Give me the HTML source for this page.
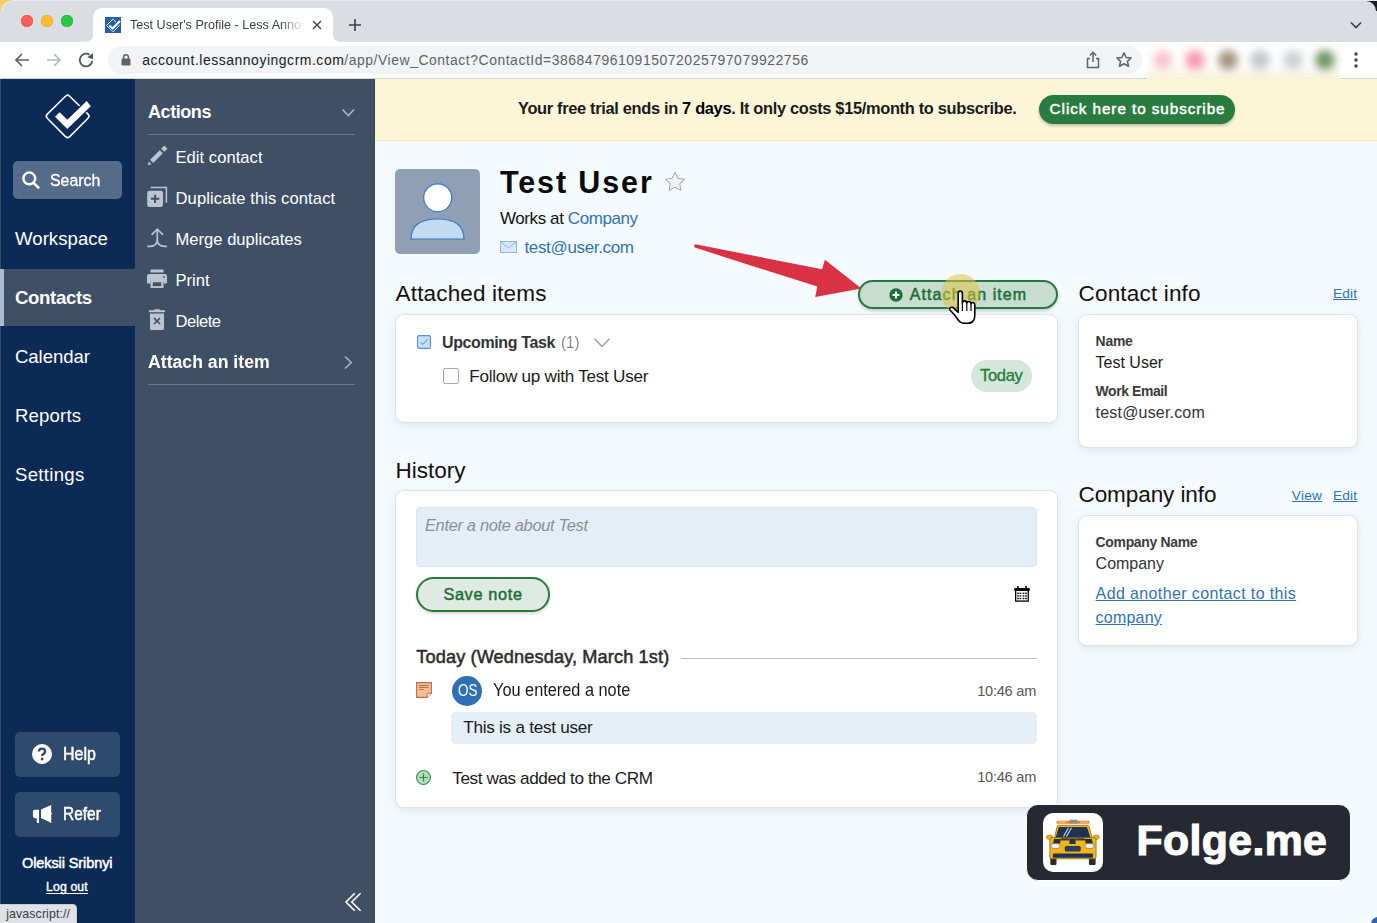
<!DOCTYPE html>
<html><head><meta charset="utf-8"><title>Test User's Profile</title>
<style>
html,body{margin:0;padding:0;width:1377px;height:923px;overflow:hidden;background:#fff;}
body{position:relative;font-family:"Liberation Sans",sans-serif;}
.r{position:absolute;}
.t{position:absolute;white-space:nowrap;line-height:1;}
svg.r{overflow:visible;}
</style></head><body>
<div class="r" style="left:0px;top:0px;width:1377px;height:42px;background:#dadde1;"></div>
<div class="r" style="left:0px;top:42px;width:1377px;height:37px;background:#fff;"></div>
<svg class="r" style="left:1365px;top:0" width="12" height="12"><path d="M12 0 H1 V1 A10 10 0 0 1 11 11 H12 Z" fill="#1d1d1f"/></svg>
<div class="r" style="left:0px;top:78px;width:1377px;height:1px;background:#d3d6da;"></div>
<div class="r" style="left:93px;top:8px;width:240px;height:35px;background:#fff;border-radius:9px 9px 0 0;"></div>
<svg class="r" style="left:85px;top:34px" width="8" height="8"><path d="M0 8 Q8 8 8 0 L8 8 Z" fill="#fff"/></svg>
<svg class="r" style="left:333px;top:34px" width="8" height="8"><path d="M8 8 Q0 8 0 0 L0 8 Z" fill="#fff"/></svg>
<div class="r" style="left:21px;top:15px;width:12px;height:12px;border-radius:50%;background:#fe5f57;box-shadow:inset 0 0 0 0.5px #e14640;"></div>
<div class="r" style="left:41px;top:15px;width:12px;height:12px;border-radius:50%;background:#febc2e;box-shadow:inset 0 0 0 0.5px #dfa023;"></div>
<div class="r" style="left:61px;top:15px;width:12px;height:12px;border-radius:50%;background:#28c840;box-shadow:inset 0 0 0 0.5px #1aab29;"></div>
<div class="r" style="left:0px;top:0px;width:1377px;height:1px;background:#e9e9ec;"></div>
<svg class="r" style="left:0;top:0" width="14" height="14"><path d="M0 0 H11 V1 A10 10 0 0 0 1 11 V11 H0 Z" fill="#efce62"/><path d="M11 1.2 A9.8 9.8 0 0 0 1.2 11" fill="none" stroke="#e9eaee" stroke-width="1"/></svg>
<svg class="r" style="left:105px;top:17px" width="16" height="16" viewBox="0 0 16 16"><rect width="16" height="16" fill="#2360a8"/>
<path d="M7.9 2.1 L14.3 8.5 L7.9 14.9 L1.5 8.5 Z" fill="none" stroke="#fff" stroke-width="0.9" stroke-linejoin="round"/>
<path d="M4.4 8.4 L7.6 11.6 L15 4" fill="none" stroke="#2360a8" stroke-width="4"/>
<path d="M4.4 8.4 L7.6 11.6 L15 4" fill="none" stroke="#fff" stroke-width="2.1"/></svg>
<div class="t" style="left:130px;top:17px;font-size:12.6px;line-height:16px;color:#3c4043;width:174px;overflow:hidden;-webkit-mask-image:linear-gradient(90deg,#000 150px,transparent 174px);">Test User's Profile - Less Annoying CRM</div>
<svg class="r" style="left:312px;top:20px" width="10" height="10"><path d="M1 1L9 9M9 1L1 9" stroke="#3c4043" stroke-width="1.4"/></svg>
<svg class="r" style="left:348px;top:18px" width="14" height="14"><path d="M7 1V13M1 7H13" stroke="#3c4043" stroke-width="1.6"/></svg>
<svg class="r" style="left:1350px;top:21px" width="12" height="8"><path d="M1 1.5L6 6.5L11 1.5" fill="none" stroke="#3c4043" stroke-width="1.6"/></svg>
<svg class="r" style="left:14px;top:52px" width="16" height="16"><path d="M15 8H2M8 2L2 8L8 14" fill="none" stroke="#5f6368" stroke-width="1.7"/></svg>
<svg class="r" style="left:46px;top:52px" width="16" height="16"><path d="M1 8H14M8 2L14 8L8 14" fill="none" stroke="#b5b8bd" stroke-width="1.7"/></svg>
<svg class="r" style="left:78px;top:52px" width="16" height="16"><path d="M14.3 9 A6.3 6.3 0 1 1 11.6 2.8" fill="none" stroke="#4f5358" stroke-width="1.8"/><path d="M9.4 5.2 L15 1.2 L15 7.2Z" fill="#4f5358"/></svg>
<div class="r" style="left:108px;top:46px;width:1034px;height:28px;border-radius:14px;background:#f1f3f4;"></div>
<svg class="r" style="left:121px;top:53px" width="10" height="13"><path d="M2.6 6V4.2a2.4 2.4 0 0 1 4.8 0V6" fill="none" stroke="#5f6368" stroke-width="1.5"/><rect x="0.5" y="5.6" width="9" height="7" rx="1.3" fill="#5f6368"/></svg>
<div class="t" style="left:142.30px;top:53.70px;font-size:13.95px;letter-spacing:0.539px;"><span style="color:#202124;">account.lessannoyingcrm.com</span><span style="color:#5f6368;">/app/View_Contact?ContactId=3868479610915072025797079922756</span></div>
<svg class="r" style="left:1085px;top:51px" width="16" height="18"><path d="M8 1.5V11M4.8 4.5L8 1.3L11.2 4.5" fill="none" stroke="#5f6368" stroke-width="1.5"/><path d="M5 7.5H2.5V16.5H13.5V7.5H11" fill="none" stroke="#5f6368" stroke-width="1.5"/></svg>
<svg class="r" style="left:1115px;top:51px" width="18" height="18" viewBox="0 0 24 24"><path d="M12 2.5l2.9 6.1 6.6.7-4.9 4.5 1.4 6.5L12 17l-6 3.3 1.4-6.5L2.5 9.3l6.6-.7z" fill="none" stroke="#5f6368" stroke-width="2" stroke-linejoin="round"/></svg>
<div class="r" style="left:1147px;top:42px;width:193px;height:37px;background:linear-gradient(#fff 60%,#f7f2dc);"></div>
<div class="r" style="left:1153px;top:50px;width:20px;height:20px;border-radius:50%;background:#f7c6d0;filter:blur(4.5px);"></div>
<div class="r" style="left:1185px;top:50px;width:20px;height:20px;border-radius:50%;background:#f59aae;filter:blur(4.5px);"></div>
<div class="r" style="left:1218px;top:50px;width:20px;height:20px;border-radius:50%;background:#a5937d;filter:blur(4.5px);"></div>
<div class="r" style="left:1250px;top:50px;width:20px;height:20px;border-radius:50%;background:#c4c6cb;filter:blur(4.5px);"></div>
<div class="r" style="left:1283px;top:50px;width:20px;height:20px;border-radius:50%;background:#cfd0d5;filter:blur(4.5px);"></div>
<div class="r" style="left:1315px;top:50px;width:20px;height:20px;border-radius:50%;background:#6d9662;filter:blur(4.5px);"></div>
<svg class="r" style="left:1352px;top:51px" width="8" height="18"><circle cx="4" cy="3" r="1.7" fill="#3c4043"/><circle cx="4" cy="9" r="1.7" fill="#3c4043"/><circle cx="4" cy="15" r="1.7" fill="#3c4043"/></svg>
<div class="r" style="left:0px;top:79px;width:135px;height:844px;background:#0b2a55;"></div>
<div class="r" style="left:0px;top:79px;width:1px;height:844px;background:#3b4d66;"></div>
<div class="r" style="left:135px;top:79px;width:240px;height:844px;background:#3f5066;"></div>
<div class="r" style="left:374px;top:79px;width:1px;height:844px;background:#37475d;"></div>
<div class="r" style="left:375px;top:79px;width:1002px;height:844px;background:#f5fafe;"></div>
<div class="r" style="left:375px;top:79px;width:1002px;height:62px;background:#fdf5d8;border-bottom:1px solid #f0e2a8;border-left:1px solid #fff3c4;box-sizing:border-box;"></div>
<svg class="r" style="left:40px;top:88px" width="56" height="56" viewBox="40 88 56 56">
<path d="M65.5 96.2 Q67.6 94.1 69.7 96.2 L88 114.1 Q90.1 116.2 88 118.3 L69.7 136.6 Q67.6 138.7 65.5 136.6 L47.3 118.3 Q45.2 116.2 47.3 114.1 Z" fill="none" stroke="#fff" stroke-width="1.5"/>
<path d="M59.7 112.3 L67.3 119.7 L86.7 101 L90.8 106.2 L67.3 129 L55 116.8 Z" fill="#fff" stroke="#0b2a55" stroke-width="2.6" paint-order="stroke" stroke-linejoin="miter"/>
</svg>
<div class="r" style="left:13px;top:161px;width:109px;height:38px;border-radius:5px;background:#556b8a;"></div>
<svg class="r" style="left:21px;top:170px" width="20" height="20"><circle cx="8.3" cy="8.4" r="5.9" fill="none" stroke="#fff" stroke-width="2.4"/><path d="M12.6 12.8L17.4 17.6" stroke="#fff" stroke-width="2.6" stroke-linecap="round"/></svg>
<div class="t" style="left:50.00px;top:173.00px;font-size:16.86px;letter-spacing:0.000px;color:#fff;transform:scaleX(0.9434);transform-origin:0 0;-webkit-text-stroke:0.35px #fff;">Search</div>
<div class="r" style="left:0px;top:269px;width:135px;height:57px;background:#3f5066;"></div>
<div class="r" style="left:0px;top:269px;width:4px;height:57px;background:#a9bbd0;"></div>
<div class="t" style="left:15.00px;top:230.00px;font-size:18.60px;letter-spacing:0.037px;color:#fff;">Workspace</div>
<div class="t" style="left:15.00px;top:289.00px;font-size:18.60px;letter-spacing:-0.343px;color:#fff;font-weight:700;">Contacts</div>
<div class="t" style="left:15.00px;top:348.00px;font-size:18.60px;letter-spacing:-0.086px;color:#fff;">Calendar</div>
<div class="t" style="left:15.00px;top:407.00px;font-size:18.60px;letter-spacing:0.167px;color:#fff;">Reports</div>
<div class="t" style="left:15.00px;top:466.00px;font-size:18.60px;letter-spacing:0.300px;color:#fff;">Settings</div>
<div class="r" style="left:15px;top:732px;width:105px;height:45px;border-radius:5px;background:#2f4a6c;"></div>
<div class="r" style="left:15px;top:792px;width:105px;height:45px;border-radius:5px;background:#2f4a6c;"></div>
<svg class="r" style="left:32px;top:744px" width="20" height="20" viewBox="0 0 20 20"><circle cx="10" cy="10" r="10" fill="#fff"/><path d="M6.9 7.6 Q6.9 4.6 10 4.6 Q13.1 4.6 13.1 7.4 Q13.1 9 11.3 10 Q10.1 10.7 10.1 12" fill="none" stroke="#2f4a6c" stroke-width="2.3"/><circle cx="10.1" cy="15" r="1.4" fill="#2f4a6c"/></svg>
<div class="t" style="left:62.60px;top:746.00px;font-size:17.44px;letter-spacing:0.000px;color:#fff;transform:scaleX(0.9167);transform-origin:0 0;-webkit-text-stroke:0.5px #fff;">Help</div>
<svg class="r" style="left:32px;top:804px" width="21" height="20" viewBox="0 0 21 20"><path d="M3 5.75 H7.05 V19.1 H4.8 V14.2 H3 Q0.9 14.2 0.9 12.1 V7.85 Q0.9 5.75 3 5.75Z" fill="#fff"/><path d="M9 5.4 L19.2 0.9 V8.4 L20.1 9.6 L19.2 10.8 V18.9 L9 13.9Z" fill="#fff"/></svg>
<div class="t" style="left:62.60px;top:806.00px;font-size:17.44px;letter-spacing:0.000px;color:#fff;transform:scaleX(0.8860);transform-origin:0 0;-webkit-text-stroke:0.5px #fff;">Refer</div>
<div class="t" style="left:22.00px;top:855.70px;font-size:14.54px;letter-spacing:-0.107px;color:#fff;-webkit-text-stroke:0.5px #fff;">Oleksii Sribnyi</div>
<div class="t" style="left:46.00px;top:881.40px;font-size:12.21px;letter-spacing:0.167px;color:#fff;-webkit-text-stroke:0.4px #fff;text-decoration:underline;text-underline-offset:2px;">Log out</div>
<div class="t" style="left:148.00px;top:103.00px;font-size:18.02px;letter-spacing:-0.433px;color:#fff;font-weight:700;">Actions</div>
<svg class="r" style="left:341px;top:108px" width="15" height="10"><path d="M1.5 1.5L7.3 7.5L13.1 1.5" fill="none" stroke="#aab4c1" stroke-width="1.6"/></svg>
<div class="r" style="left:148px;top:134px;width:207px;height:1px;background:#6a7a8e;"></div>
<div class="r" style="left:148px;top:384px;width:207px;height:1px;background:#6a7a8e;"></div>
<svg class="r" style="left:147px;top:145px" width="22" height="22" viewBox="0 0 22 22"><path d="M4.6 16.4 L14.3 6.7" stroke="#bcc4ce" stroke-width="4.4"/><path d="M15.7 5.3 L18.9 2.1" stroke="#bcc4ce" stroke-width="4.4"/><path d="M0.8 20.2 L1.7 16.4 L4.6 19.3 Z" fill="#bcc4ce"/></svg>
<div class="t" style="left:175.50px;top:150.20px;font-size:16.57px;letter-spacing:0.045px;color:#fff;">Edit contact</div>
<svg class="r" style="left:147px;top:186px" width="22" height="22" viewBox="0 0 22 22"><path d="M3.7 1.4 H19.4 V16.7" fill="none" stroke="#bcc4ce" stroke-width="1.5"/><rect x="0.2" y="4.8" width="15.8" height="16.1" rx="2.2" fill="#bcc4ce"/><path d="M8.1 8.7V17M3.95 12.85H12.25" stroke="#3f5066" stroke-width="2"/></svg>
<div class="t" style="left:175.50px;top:190.80px;font-size:16.57px;letter-spacing:0.105px;color:#fff;">Duplicate this contact</div>
<svg class="r" style="left:147px;top:227px" width="22" height="22" viewBox="0 0 22 22"><path d="M10.3 2.4 V13 Q10.3 19 3 19.4 H0.2" fill="none" stroke="#bcc4ce" stroke-width="1.7"/><path d="M10.3 13 Q10.3 19 17.6 19.4 H19.8" fill="none" stroke="#bcc4ce" stroke-width="1.7"/><path d="M4.6 7.9 L10.3 2.2 L16 7.9" fill="none" stroke="#bcc4ce" stroke-width="1.7"/></svg>
<div class="t" style="left:175.50px;top:232.00px;font-size:16.57px;letter-spacing:0.013px;color:#fff;">Merge duplicates</div>
<svg class="r" style="left:146px;top:269px" width="22" height="20" viewBox="0 0 22 20"><rect x="4.5" y="0.5" width="13" height="3" rx=".5" fill="#bcc4ce"/><path d="M3 5 H19 Q21 5 21 7 V14.5 H17.5 V12 H4.5 V14.5 H1 V7 Q1 5 3 5Z" fill="#bcc4ce"/><path d="M4.5 12 H17.5 V19 H4.5Z" fill="#bcc4ce"/><rect x="6.8" y="13.3" width="8.4" height="3.8" fill="#3f5066"/><circle cx="18" cy="8" r=".9" fill="#3f5066"/></svg>
<div class="t" style="left:175.40px;top:273.00px;font-size:16.57px;letter-spacing:0.050px;color:#fff;">Print</div>
<svg class="r" style="left:148px;top:309px" width="18" height="22" viewBox="0 0 18 22"><rect x="1" y="1.2" width="16" height="2" fill="#bcc4ce"/><rect x="6" y=".3" width="6" height="1.6" rx=".6" fill="#bcc4ce"/><path d="M2 4.6 H16 V19.5 Q16 21 14.5 21 H3.5 Q2 21 2 19.5Z" fill="#bcc4ce"/><path d="M6 9 L12 15 M12 9 L6 15" stroke="#3f5066" stroke-width="1.7"/></svg>
<div class="t" style="left:175.40px;top:313.70px;font-size:16.57px;letter-spacing:-0.440px;color:#fff;">Delete</div>
<div class="t" style="left:148.00px;top:353.00px;font-size:18.90px;letter-spacing:0.000px;color:#fff;transform:scaleX(0.9346);transform-origin:0 0;font-weight:700;">Attach an item</div>
<svg class="r" style="left:343px;top:355px" width="10" height="15"><path d="M2 1.5L8.2 7.5L2 13.5" fill="none" stroke="#aab4c1" stroke-width="1.6"/></svg>
<svg class="r" style="left:343px;top:891px" width="20" height="22"><path d="M11.8 2.2L3 11L11.8 19.8M17.6 2.2L8.8 11L17.6 19.8" fill="none" stroke="#fff" stroke-width="1.6"/></svg>
<div class="r" style="left:-1px;top:904px;width:78px;height:20px;background:#dee1e6;border:1px solid #c7cace;border-radius:0 4px 0 0;box-sizing:border-box;"></div>
<div class="t" style="left:6.20px;top:907.50px;font-size:12.35px;letter-spacing:0.117px;color:#383b40;">javascript://</div>
<div class="t" style="left:518.00px;top:100.00px;font-size:16.42px;letter-spacing:-0.329px;"><span style="color:#1a1a1a;font-weight:700;">Your free trial ends in </span><span style="color:#000;font-weight:700;">7 days</span><span style="color:#1a1a1a;font-weight:700;">. It only costs $15/month to subscribe.</span></div>
<div class="r" style="left:1039px;top:95px;width:196px;height:29px;border-radius:15px;background:#2a7b3f;box-shadow:0 2px 3px rgba(0,0,0,.22);"></div>
<div class="t" style="left:1049.60px;top:101.00px;font-size:15.26px;letter-spacing:0.941px;color:#fff;-webkit-text-stroke:0.5px #fff;">Click here to subscribe</div>
<svg class="r" style="left:395px;top:169px" width="85" height="85" viewBox="0 0 85 85"><rect width="85" height="85" rx="5" fill="#8e9fb6"/>
<circle cx="42.7" cy="28.8" r="14" fill="#fff" stroke="#3b78c3" stroke-width="1.2"/>
<path d="M16 70 Q16 50 42.7 50 Q69 50 69 70 Z" fill="#c3dbee" stroke="#3b78c3" stroke-width="1.2"/></svg>
<div class="t" style="left:500.00px;top:166.60px;font-size:30.52px;letter-spacing:1.875px;color:#0a0a0a;font-weight:700;">Test User</div>
<svg class="r" style="left:664px;top:171px" width="22" height="21" viewBox="0 0 24 23"><path d="M12 1.3l3.2 6.6 7.2 1-5.2 5.1 1.3 7.2L12 17.8l-6.5 3.4 1.3-7.2L1.6 8.9l7.2-1z" fill="#eef1f4" stroke="#a9a9a9" stroke-width="1.1" stroke-linejoin="round"/></svg>
<div class="t" style="left:500.00px;top:209.70px;font-size:17.01px;letter-spacing:-0.414px;"><span style="color:#111;">Works at </span><span style="color:#2f72b3;">Company</span></div>
<svg class="r" style="left:500px;top:241px" width="17" height="12" viewBox="0 0 17 12"><rect x=".5" y=".5" width="16" height="11" fill="#d9e8f6" stroke="#8cb4dc" stroke-width="1"/><path d="M.8 .8 L8.5 7 L16.2 .8" fill="none" stroke="#8cb4dc" stroke-width="1"/></svg>
<div class="t" style="left:524.40px;top:239.00px;font-size:17.01px;letter-spacing:-0.333px;color:#2f72b3;">test@user.com</div>
<svg class="r" style="left:680px;top:230px" width="200" height="80" viewBox="680 230 200 80"><path d="M695.5 244.2 L822.1 269.3 L824.9 259.7 L861.5 288.6 L815.2 296.9 L817.3 286.6 L694.8 247.6 Q693 245.6 695.5 244.2Z" fill="#d93245"/></svg>
<div class="t" style="left:395.60px;top:282.80px;font-size:22.53px;letter-spacing:0.146px;color:#111;">Attached items</div>
<div class="t" style="left:1078.50px;top:283.00px;font-size:22.53px;letter-spacing:0.173px;color:#111;">Contact info</div>
<div class="t" style="left:395.60px;top:459.50px;font-size:22.53px;letter-spacing:-0.017px;color:#111;">History</div>
<div class="t" style="left:1078.50px;top:484.30px;font-size:22.53px;letter-spacing:-0.091px;color:#111;">Company info</div>
<div class="r" style="left:395px;top:314px;width:663px;height:109px;background:#fff;border:1px solid #d4e4f1;border-radius:9px;box-shadow:0 3px 9px rgba(50,60,80,.10);box-sizing:border-box;"></div>
<div class="r" style="left:1078px;top:314px;width:280px;height:134px;background:#fff;border:1px solid #d4e4f1;border-radius:9px;box-shadow:0 3px 9px rgba(50,60,80,.10);box-sizing:border-box;"></div>
<div class="r" style="left:395px;top:490px;width:663px;height:318px;background:#fff;border:1px solid #d4e4f1;border-radius:9px;box-shadow:0 3px 9px rgba(50,60,80,.10);box-sizing:border-box;"></div>
<div class="r" style="left:1078px;top:515px;width:280px;height:131px;background:#fff;border:1px solid #d4e4f1;border-radius:9px;box-shadow:0 3px 9px rgba(50,60,80,.10);box-sizing:border-box;"></div>
<div class="r" style="left:858px;top:280px;width:200px;height:29px;border-radius:15px;background:#c6ddd0;border:2px solid #277a3c;box-sizing:border-box;box-shadow:0 2px 3px rgba(0,0,0,.18);"></div>
<svg class="r" style="left:889px;top:288px" width="14" height="14" viewBox="0 0 14 14"><circle cx="7" cy="7" r="6.7" fill="#1f6e36"/><path d="M7 3.6V10.4M3.6 7H10.4" stroke="#fff" stroke-width="2"/></svg>
<div class="t" style="left:909.80px;top:287.00px;font-size:15.99px;letter-spacing:1.092px;color:#1f6e36;-webkit-text-stroke:0.5px #1f6e36;">Attach an item</div>
<svg class="r" style="left:417px;top:335px" width="14" height="14" viewBox="0 0 14 14"><rect x=".6" y=".6" width="12.8" height="12.8" rx="1.3" fill="#c2e1fa" stroke="#5a8fd3" stroke-width="1.1"/><path d="M3.3 7.3L5.9 9.4L10.6 4.4" fill="none" stroke="#5a7fb5" stroke-width="1"/></svg>
<div class="t" style="left:442.00px;top:334.70px;font-size:15.99px;letter-spacing:-0.375px;color:#333;font-weight:700;">Upcoming Task</div>
<div class="t" style="left:561.00px;top:334.70px;font-size:15.99px;letter-spacing:0.000px;color:#888;transform:scaleX(0.9500);transform-origin:0 0;">(1)</div>
<svg class="r" style="left:593px;top:337px" width="18" height="12"><path d="M1.5 1.8L9 9.6L16.5 1.8" fill="none" stroke="#a0a0a0" stroke-width="1.4"/></svg>
<div class="r" style="left:443px;top:368px;width:16px;height:16px;border:1px solid #a5a5a5;border-radius:2px;background:#fff;box-sizing:border-box;"></div>
<div class="t" style="left:469.20px;top:368.00px;font-size:17.15px;letter-spacing:-0.270px;color:#1a1a1a;">Follow up with Test User</div>
<div class="r" style="left:971px;top:360px;width:61px;height:32px;border-radius:16px;background:#d3e8d8;"></div>
<div class="t" style="left:980.00px;top:367.70px;font-size:16.57px;letter-spacing:-0.350px;color:#2a7a3e;-webkit-text-stroke:0.35px #2a7a3e;">Today</div>
<div class="t" style="left:1095.60px;top:334.90px;font-size:13.95px;letter-spacing:-0.233px;color:#3a3a3a;font-weight:700;">Name</div>
<div class="t" style="left:1095.60px;top:354.50px;font-size:15.99px;letter-spacing:0.000px;color:#1a1a1a;">Test User</div>
<div class="t" style="left:1095.60px;top:385.00px;font-size:13.95px;letter-spacing:-0.400px;color:#3a3a3a;font-weight:700;">Work Email</div>
<div class="t" style="left:1095.60px;top:404.70px;font-size:15.99px;letter-spacing:0.192px;color:#333;">test@user.com</div>
<div class="t" style="left:1333.00px;top:287.40px;font-size:13.66px;letter-spacing:0.200px;color:#2f72b3;text-decoration:underline;">Edit</div>
<div class="t" style="left:1291.80px;top:488.70px;font-size:13.66px;letter-spacing:0.267px;color:#2f72b3;text-decoration:underline;">View</div>
<div class="t" style="left:1333.00px;top:488.70px;font-size:13.66px;letter-spacing:0.200px;color:#2f72b3;text-decoration:underline;">Edit</div>
<div class="t" style="left:1095.60px;top:536.00px;font-size:13.95px;letter-spacing:-0.309px;color:#3a3a3a;font-weight:700;">Company Name</div>
<div class="t" style="left:1095.60px;top:555.50px;font-size:15.99px;letter-spacing:0.000px;color:#333;">Company</div>
<div class="t" style="left:1095.60px;top:585.90px;font-size:15.99px;letter-spacing:0.385px;color:#2f72b3;text-decoration:underline;">Add another contact to this</div>
<div class="t" style="left:1095.60px;top:609.70px;font-size:15.99px;letter-spacing:0.217px;color:#2f72b3;text-decoration:underline;">company</div>
<div class="r" style="left:416px;top:507px;width:621px;height:60px;border-radius:4px;background:#e4eef6;border:1px solid #d9e6f1;box-sizing:border-box;"></div>
<div class="t" style="left:425.00px;top:516.60px;font-size:16.42px;letter-spacing:-0.318px;color:#8a8f94;font-style:italic;">Enter a note about Test</div>
<div class="r" style="left:416px;top:577px;width:134px;height:35px;border-radius:18px;background:#dfeae2;border:2px solid #277a3c;box-sizing:border-box;box-shadow:0 2px 3px rgba(0,0,0,.15);"></div>
<div class="t" style="left:443.40px;top:585.70px;font-size:16.28px;letter-spacing:0.663px;color:#1f6e36;-webkit-text-stroke:0.5px #1f6e36;">Save note</div>
<svg class="r" style="left:1014px;top:586px" width="16" height="16" viewBox="0 0 16 16"><rect x="1.65" y="4" width="12.6" height="11.1" fill="#fff" stroke="#000" stroke-width="1.3"/><rect x="0.1" y="2" width="15.7" height="2.9" rx="1" fill="#000"/><rect x="3.1" y="0" width="1.8" height="2.8" fill="#222"/><rect x="11.1" y="0" width="1.9" height="2.8" fill="#222"/><g fill="#111"><rect x="3.15" y="6.60" width="1.7" height="1.4"/><rect x="5.55" y="6.60" width="1.7" height="1.4"/><rect x="8.65" y="6.60" width="1.7" height="1.4"/><rect x="11.15" y="6.60" width="1.7" height="1.4"/><rect x="3.15" y="9.20" width="1.7" height="1.4"/><rect x="5.55" y="9.20" width="1.7" height="1.4"/><rect x="8.65" y="9.20" width="1.7" height="1.4"/><rect x="11.15" y="9.20" width="1.7" height="1.4"/><rect x="3.15" y="11.80" width="1.7" height="1.4"/><rect x="5.55" y="11.80" width="1.7" height="1.4"/><rect x="8.65" y="11.80" width="1.7" height="1.4"/><rect x="11.15" y="11.80" width="1.7" height="1.4"/></g></svg>
<div class="t" style="left:416.30px;top:648.00px;font-size:18.17px;letter-spacing:0.122px;color:#2b2b2b;-webkit-text-stroke:0.5px #2b2b2b;">Today (Wednesday, March 1st)</div>
<div class="r" style="left:681px;top:658px;width:356px;height:1px;background:#bdbdbd;"></div>
<svg class="r" style="left:416px;top:682px" width="16" height="16" viewBox="0 0 16 16"><path d="M.6 .6H15.4V11.2L11.2 15.4H.6Z" fill="#f9bd94" stroke="#b87048" stroke-width="1.1"/><path d="M11.2 15.4V11.2H15.4" fill="#fff" stroke="#b87048" stroke-width="1"/><path d="M3 3.5H12.6M3 5.5H12.6M3 7.5H7.5" stroke="#b87048" stroke-width="1"/></svg>
<div class="r" style="left:452px;top:676px;width:30px;height:30px;border-radius:50%;background:#2e70b1;"></div>
<div class="t" style="left:457.60px;top:682.00px;font-size:17.15px;letter-spacing:0.000px;color:#fff;transform:scaleX(0.7880);transform-origin:0 0;">OS</div>
<div class="t" style="left:492.50px;top:682.30px;font-size:17.44px;letter-spacing:0.000px;color:#1a1a1a;transform:scaleX(0.9354);transform-origin:0 0;">You entered a note</div>
<div class="t" style="left:977.20px;top:684.00px;font-size:14.54px;letter-spacing:-0.214px;color:#555;">10:46 am</div>
<div class="r" style="left:451px;top:712px;width:586px;height:32px;border-radius:5px;background:#e4eef6;"></div>
<div class="t" style="left:463.20px;top:718.80px;font-size:17.15px;letter-spacing:-0.261px;color:#1a1a1a;">This is a test user</div>
<svg class="r" style="left:415px;top:769px" width="17" height="17" viewBox="0 0 17 17"><circle cx="8.5" cy="8.5" r="7" fill="#b2dbb8" stroke="#428c52" stroke-width="1.1"/><path d="M8.5 4.4V12.6M4.4 8.5H12.6" stroke="#3a7f48" stroke-width="1.1"/></svg>
<div class="t" style="left:452.30px;top:770.00px;font-size:17.15px;letter-spacing:-0.408px;color:#1a1a1a;">Test was added to the CRM</div>
<div class="t" style="left:977.20px;top:769.70px;font-size:14.54px;letter-spacing:-0.214px;color:#555;">10:46 am</div>
<div class="r" style="left:941px;top:274px;width:39px;height:39px;border-radius:50%;background:rgba(222,196,70,.55);"></div>
<svg class="r" style="left:946px;top:289px" width="34" height="38" viewBox="0 0 34 38"><path d="M12.2 4.6 Q12.2 2 14.3 2 Q16.4 2 16.4 4.6 V14 Q16.6 11.9 18.6 11.9 Q20.6 11.9 20.8 14.2 Q21.1 12.5 23 12.5 Q24.9 12.6 25 14.8 Q25.5 13.3 27.1 13.5 Q28.8 13.8 28.8 16 V26 Q28.8 29.5 27.8 31 Q26 34.2 22 34.2 H17.5 Q14.5 34.2 12.6 31.5 Q10.5 28.6 8.6 26 L4.2 21.3 Q3 19.6 4.6 18.6 Q6.3 17.6 8.1 19.4 L12.2 23.3 Z" fill="#fff" stroke="#000" stroke-width="1.6" stroke-linejoin="round"/>
<path d="M16.4 14V22M20.8 14.2V22M25 14.8V22" stroke="#000" stroke-width="1.2"/></svg>
<div class="r" style="left:1026px;top:804px;width:325px;height:77px;border-radius:12px;background:#262832;border:1px solid #fff;box-sizing:border-box;"></div>
<div class="r" style="left:1043px;top:813px;width:60px;height:59px;border-radius:10px;background:#fff;"></div>
<svg class="r" style="left:1046px;top:819px" width="54" height="47" viewBox="0 0 54 47">
<rect x="10.5" y="1.7" width="33" height="3.1" rx="1.2" fill="#f47c2a"/><rect x="12" y="2.6" width="8" height="1" fill="#fbd0a8"/><rect x="34" y="2.6" width="8" height="1" fill="#fbd0a8"/><rect x="23.4" y="0.7" width="7.7" height="3.8" fill="#8a8d93"/>
<rect x="4.3" y="38" width="6.2" height="8" rx="1.2" fill="#2b2b2b"/><rect x="42.9" y="38" width="6.7" height="8" rx="1.2" fill="#2b2b2b"/>
<path d="M12 6.3 H41 Q42.5 6.3 43.2 7.8 L46 18.7 H8.5 L11 7.8 Q11.5 6.3 12 6.3Z" fill="#f5b514" stroke="#7d5d05" stroke-width=".7"/>
<path d="M12.8 8 H40.9 L44.6 18.7 H9.6 Z" fill="#1e3256"/>
<path d="M17.5 17.5 L22.5 8.8 M20.5 17.5 L25.5 8.8" stroke="#d8dbe2" stroke-width="1.1"/>
<ellipse cx="3.6" cy="18.2" rx="3.2" ry="2.2" fill="#f5b514" stroke="#7d5d05" stroke-width=".5"/><ellipse cx="50.1" cy="18.2" rx="3.2" ry="2.2" fill="#f5b514" stroke="#7d5d05" stroke-width=".5"/>
<path d="M5.5 18.7 H48.3 Q50.1 18.7 50.1 20.5 V37.8 Q50.1 39.8 48.1 39.8 H5.8 Q3.8 39.8 3.8 37.8 V20.5 Q3.8 18.7 5.5 18.7Z" fill="#f5b514" stroke="#7d5d05" stroke-width=".7"/>
<path d="M8 20 H15 L14 24.6 H7Z M23.4 19.5 H29.6 V24.9 H23.4Z M38.8 20 H45.8 L46.8 24.6 H39.8Z" fill="#2a2f3a"/>
<path d="M15 19.3 H23.4 V21.5 H15Z M29.6 19.3 H38.8 V21.5 H29.6Z" fill="#3a3f4a"/>
<ellipse cx="9.5" cy="27" rx="4.6" ry="2.5" fill="#f2f2f2" stroke="#555" stroke-width=".5"/><ellipse cx="43.4" cy="27" rx="4.6" ry="2.5" fill="#f2f2f2" stroke="#555" stroke-width=".5"/>
<rect x="18.8" y="26.9" width="15.9" height="5.7" rx="1.5" fill="#1e3256"/>
<path d="M21 27.5V32M23 27.5V32M25 27.5V32M27 27.5V32M29 27.5V32M31 27.5V32M33 27.5V32" stroke="#4a5f88" stroke-width=".6"/>
<rect x="6.9" y="34.6" width="40.1" height="4.2" rx="1" fill="#1e3256"/>
</svg>
<div class="t" style="left:1136.60px;top:819.00px;font-size:42.73px;letter-spacing:0.386px;color:#fff;font-weight:700;-webkit-text-stroke:1.2px #fff;">Folge.me</div>
<div class="r" style="left:1371px;top:917px;width:14px;height:14px;border-radius:50%;background:#2a67b0;"></div>
</body></html>
